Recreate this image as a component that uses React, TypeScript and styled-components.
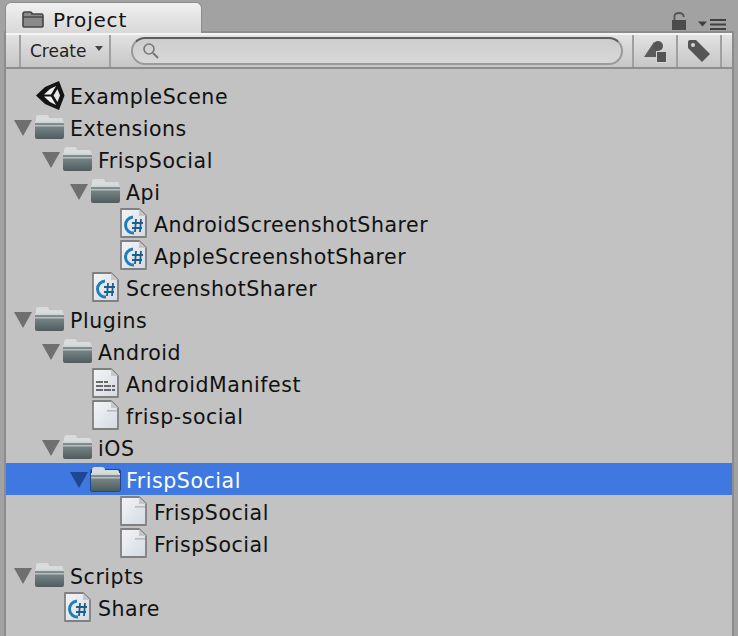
import styled, { createGlobalStyle } from 'styled-components';

const Global = createGlobalStyle`
    html, body {
        margin: 0;
        padding: 0;
        background: #a2a2a2;
    }
`;

const Window = styled.div`
    width: 738px;
    height: 636px;
    overflow: hidden;
    display: flex;
    flex-direction: column;
    padding: 0 4px;
    box-sizing: border-box;
    font-family: 'DejaVu Sans', 'Liberation Sans', sans-serif;
    color: #111;
`;

const TabStrip = styled.div`
    height: 33px;
    flex: none;
    display: flex;
    align-items: flex-end;
    justify-content: space-between;
    box-shadow: inset 0 -2px #8c8c8c;
`;

const Tab = styled.div`
    width: 197px;
    height: 31px;
    margin-left: 1px;
    box-sizing: border-box;
    padding: 3px 0 0 16px;
    display: flex;
    align-items: center;
    gap: 9px;
    font-size: 20px;
    letter-spacing: 0.8px;
    border-radius: 6px 6px 0 0;
    border: 1px solid #8c8c8c;
    border-bottom: none;
    background: linear-gradient(#f0f0f0, #d8d8d8);
`;

const TabActions = styled.div`
    display: flex;
    align-items: flex-end;
    gap: 12px;
    padding: 0 8px 3px 0;
`;

const Panel = styled.div`
    flex: 1;
    display: flex;
    flex-direction: column;
    border-left: 2px solid #8c8c8c;
    border-right: 2px solid #8c8c8c;
    background: #c2c2c2;
`;

const Toolbar = styled.div`
    height: 36px;
    flex: none;
    box-sizing: border-box;
    display: flex;
    align-items: stretch;
    border-top: 2px solid #f4f4f4;
    border-bottom: 2px solid #8e8e8e;
    background: linear-gradient(#e2e2e2, #c6c6c6);
    padding-left: 13px;
`;

const CreateButton = styled.div`
    width: 92px;
    box-sizing: border-box;
    border-left: 2px solid #a0a0a0;
    border-right: 2px solid #a0a0a0;
    display: flex;
    align-items: center;
    padding: 0 0 0 9px;
    gap: 8px;
    font-size: 17px;
    color: #222;
`;

const CaretBox = styled.div`
    display: flex;
    padding-bottom: 5px;
`;

const SearchField = styled.div`
    width: 492px;
    height: 28px;
    align-self: center;
    margin-left: 20px;
    box-sizing: border-box;
    border-radius: 14px;
    border: 2px solid #9a9a9a;
    border-top-color: #5e5e5e;
    background: linear-gradient(#cdcdcd, #d8d8d8);
    display: flex;
    align-items: center;
    padding-left: 9px;
`;

const ToolButton = styled.div<{ $first?: boolean }>`
    width: ${({ $first }) => ($first ? 46 : 44)}px;
    box-sizing: border-box;
    border-right: 2px solid #a0a0a0;
    ${({ $first }) => $first && 'border-left: 2px solid #a0a0a0; margin-left: 9px;'}
    display: flex;
    align-items: center;
    justify-content: center;
`;

const Tree = styled.div`
    padding-top: 10px;
    display: flex;
    flex-direction: column;
`;

const Row = styled.div<{ $depth: number; $selected?: boolean }>`
    height: 32px;
    display: flex;
    align-items: center;
    box-sizing: border-box;
    padding-left: ${({ $depth }) => 8 + $depth * 28}px;
    font-size: 20.5px;
    letter-spacing: 0.55px;
    background: ${({ $selected }) => ($selected ? '#3e78e0' : 'transparent')};
    color: ${({ $selected }) => ($selected ? '#fff' : '#111')};
`;

const ArrowSlot = styled.div`
    width: 20px;
    flex: none;
    display: flex;
    padding-top: 2px;
`;

const IconSlot = styled.div<{ $inset: number }>`
    width: 36px;
    flex: none;
    box-sizing: border-box;
    padding-left: ${({ $inset }) => $inset}px;
    display: flex;
    align-items: center;
`;

const Label = styled.span`
    padding-top: 4px;
`;

const Arrow = ({ color = '#6f6f6f' }: { color?: string }) => (
    <svg width="18" height="16" viewBox="0 0 18 16">
        <path d="M0 0H18L9 16Z" fill={color} />
    </svg>
);

const Folder = ({ outline }: { outline?: boolean }) => (
    <svg width="31" height="26" viewBox="0 0 31 26">
        <defs>
            <linearGradient id="fb" x1="0" y1="0" x2="0" y2="1">
                <stop offset="0" stopColor="#8a9696" />
                <stop offset="1" stopColor="#4e5c5e" />
            </linearGradient>
        </defs>
        {outline && <rect x="0" y="3" width="31" height="23" rx="3" fill="#1f4690" />}
        <path d="M2 8V4Q2 1 5 1H12Q15 1 15 4H27Q29 4 29 6V8Z" fill="#d8dcdc" />
        <rect x="1" y="7" width="29" height="18" rx="2" fill="url(#fb)" />
        <rect x="1" y="7" width="29" height="2" fill="#cfd6d6" />
        <rect x="1" y="11" width="29" height="1.5" fill="#b4bebe" />
    </svg>
);

const Page = ({ children }: { children?: React.ReactNode }) => (
    <svg width="27" height="30" viewBox="0 0 27 30">
        <defs>
            <linearGradient id="pg" x1="0" y1="0" x2="1" y2="1">
                <stop offset="0" stopColor="#f4f5f7" />
                <stop offset="1" stopColor="#d4dae2" />
            </linearGradient>
        </defs>
        <path
            d="M1 1H19L26 8V29H1Z"
            fill="url(#pg)"
            stroke="#808080"
            strokeWidth="1.8"
            strokeLinejoin="round"
        />
        <path d="M19 1V8H26Z" fill="#c8c8c8" />
        {children}
    </svg>
);

const BlankFile = () => (
    <Page>
        <rect x="15" y="10" width="10" height="1.6" fill="#bcbcbc" />
    </Page>
);

const TextFile = () => (
    <Page>
        <path d="M4 14H16M4 18H23M4 22H23" stroke="#3f3f3f" strokeWidth="1.6" strokeDasharray="7 1" />
    </Page>
);

const ScriptFile = () => (
    <Page>
        <path d="M13 9A8 8 0 1 0 14 25" fill="none" stroke="#1f7fb8" strokeWidth="3" />
        <path d="M12 15H23M12 20H22M16 11L15 24M21 11L20 24" stroke="#1c5f8c" strokeWidth="1.8" />
    </Page>
);

const UnityLogo = () => (
    <svg width="29" height="29" viewBox="0 0 29 29">
        <path d="M0 14.500L9 6L23 0L28.500 14.500L23 29L9 23Z" fill="#141414" />
        <path d="M8 13.500L14 8L20 5L15 13.500Z" fill="#f4f4f4" />
        <path d="M8 15.500H15L20 24L14 21Z" fill="#f4f4f4" />
        <path d="M21.500 8L24 14.500L21.500 21L17.500 14.500Z" fill="#e8e8e8" />
    </svg>
);

const FolderGlyph = () => (
    <svg width="22" height="17" viewBox="0 0 22 17">
        <path
            d="M1 15V3Q1 1 3 1H8Q10 1 10 3H20Q21 3 21 5V15Q21 16 20 16H2Q1 16 1 15Z"
            fill="#8a8a8a"
            stroke="#444"
            strokeWidth="1.6"
        />
        <path d="M1 6H21" stroke="#444" strokeWidth="1.4" />
    </svg>
);

const Lock = () => (
    <svg width="14" height="18" viewBox="0 0 14 18">
        <path d="M2.500 8V4Q2.500 1 7 1Q11.500 1 11.800 5" fill="none" stroke="#555" strokeWidth="1.8" />
        <rect x="0" y="8" width="14" height="10" fill="#4c4c4c" />
    </svg>
);

const MenuLines = () => (
    <svg width="28" height="11" viewBox="0 0 28 11">
        <path d="M12 1H28M12 5.500H28M12 10H28" stroke="#404040" strokeWidth="1.8" />
        <path d="M0 2.500H9L4.500 7.500Z" fill="#404040" />
    </svg>
);

const ShapesIcon = () => (
    <svg width="24" height="24" viewBox="0 0 24 24">
        <path d="M11 3L1 18H18Z" fill="#5a5a5a" />
        <circle cx="15" cy="7" r="5" fill="#555" />
        <rect x="13.500" y="12.500" width="10" height="11" fill="#555" stroke="#d4d4d4" strokeWidth="1" />
    </svg>
);

const TagIcon = () => (
    <svg width="24" height="24" viewBox="0 0 24 24">
        <path d="M1 3Q1 1 3 1H9L23 15L15 23L1 9Z" fill="#555" />
        <circle cx="6" cy="6" r="2" fill="#d4d4d4" />
    </svg>
);

const SearchIcon = () => (
    <svg width="18" height="18" viewBox="0 0 18 18">
        <circle cx="7" cy="7" r="5" fill="none" stroke="#777" strokeWidth="1.6" />
        <path d="M11 11L16 16" stroke="#777" strokeWidth="2" />
    </svg>
);

const CreateCaret = () => (
    <svg width="8" height="5" viewBox="0 0 8 5">
        <path d="M0 0H8L4 5Z" fill="#444" />
    </svg>
);

type Kind = 'folder' | 'script' | 'text' | 'file' | 'scene';

interface Item {
    name: string;
    depth: number;
    kind: Kind;
    selected?: boolean;
}

const items: Item[] = [
    { name: 'ExampleScene', depth: 0, kind: 'scene' },
    { name: 'Extensions', depth: 0, kind: 'folder' },
    { name: 'FrispSocial', depth: 1, kind: 'folder' },
    { name: 'Api', depth: 2, kind: 'folder' },
    { name: 'AndroidScreenshotSharer', depth: 3, kind: 'script' },
    { name: 'AppleScreenshotSharer', depth: 3, kind: 'script' },
    { name: 'ScreenshotSharer', depth: 2, kind: 'script' },
    { name: 'Plugins', depth: 0, kind: 'folder' },
    { name: 'Android', depth: 1, kind: 'folder' },
    { name: 'AndroidManifest', depth: 2, kind: 'text' },
    { name: 'frisp-social', depth: 2, kind: 'file' },
    { name: 'iOS', depth: 1, kind: 'folder' },
    { name: 'FrispSocial', depth: 2, kind: 'folder', selected: true },
    { name: 'FrispSocial', depth: 3, kind: 'file' },
    { name: 'FrispSocial', depth: 3, kind: 'file' },
    { name: 'Scripts', depth: 0, kind: 'folder' },
    { name: 'Share', depth: 1, kind: 'script' },
];

const ItemIcon = ({ kind, selected }: { kind: Kind; selected?: boolean }) => {
    if (kind === 'folder') return <Folder outline={selected} />;
    if (kind === 'script') return <ScriptFile />;
    if (kind === 'text') return <TextFile />;
    if (kind === 'scene') return <UnityLogo />;
    return <BlankFile />;
};

const App = () => {
    return (
        <Window>
            <Global />
            <TabStrip>
                <Tab>
                    <FolderGlyph />
                    Project
                </Tab>
                <TabActions>
                    <Lock />
                    <MenuLines />
                </TabActions>
            </TabStrip>
            <Panel>
                <Toolbar>
                    <CreateButton>
                        Create
                        <CaretBox>
                            <CreateCaret />
                        </CaretBox>
                    </CreateButton>
                    <SearchField>
                        <SearchIcon />
                    </SearchField>
                    <ToolButton $first>
                        <ShapesIcon />
                    </ToolButton>
                    <ToolButton>
                        <TagIcon />
                    </ToolButton>
                </Toolbar>
                <Tree>
                    {items.map((item, i) => (
                        <Row key={i} $depth={item.depth} $selected={item.selected}>
                            <ArrowSlot>
                                {item.kind === 'folder' && (
                                    <Arrow color={item.selected ? '#1f4690' : '#6f6f6f'} />
                                )}
                            </ArrowSlot>
                            <IconSlot $inset={item.kind === 'folder' ? 0 : 2}>
                                <ItemIcon kind={item.kind} selected={item.selected} />
                            </IconSlot>
                            <Label>{item.name}</Label>
                        </Row>
                    ))}
                </Tree>
            </Panel>
        </Window>
    );
};

export default App;
